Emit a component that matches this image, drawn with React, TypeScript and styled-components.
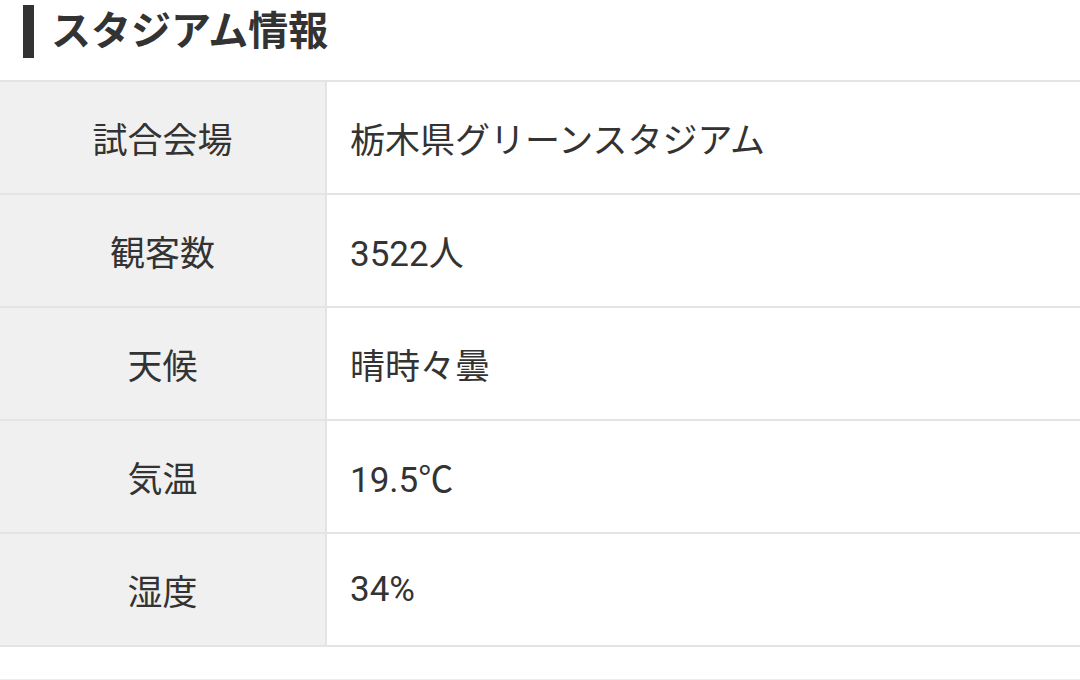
import React from "react";
import styled, { createGlobalStyle } from "styled-components";

const Global = createGlobalStyle`
  html, body { margin: 0; padding: 0; background: #fff; }
  body { font-family: Roboto, "Noto Sans CJK JP", sans-serif; color: #333; }
`;

const Page = styled.div`
  width: 1080px;
  display: flex;
  flex-direction: column;
`;

const Heading = styled.h2`
  margin: 5px 0 0 23px;
  height: 53px;
  display: flex;
  align-items: center;
  gap: 17px;
  font-size: 40px;
  font-weight: 700;
  color: #333;
  line-height: 1;
  &::before {
    content: "";
    width: 11px;
    align-self: stretch;
    background: #333;
  }
`;

const Table = styled.div`
  margin-top: 22px;
  border-top: 2px solid #e4e4e4;
  display: grid;
  grid-template-columns: 327px 1fr;
`;

const Label = styled.div`
  height: 111px;
  background: #f0f0f0;
  border-right: 2px solid #e4e4e4;
  border-bottom: 2px solid #e4e4e4;
  display: flex;
  align-items: center;
  justify-content: center;
  font-size: 35px;
  color: #333;
`;

const Value = styled.div`
  height: 111px;
  border-bottom: 2px solid #e4e4e4;
  display: flex;
  align-items: center;
  padding-left: 23px;
  font-size: 35px;
  color: #333;
`;

const Divider = styled.div`
  margin-top: 32px;
  border-top: 2px solid #ececec;
`;

const rows: [string, string][] = [
  ["試合会場", "栃木県グリーンスタジアム"],
  ["観客数", "3522人"],
  ["天候", "晴時々曇"],
  ["気温", "19.5℃"],
  ["湿度", "34%"],
];

export default function App() {
  return (
    <Page>
      <Global />
      <Heading>スタジアム情報</Heading>
      <Table>
        {rows.map(([k, v]) => (
          <React.Fragment key={k}>
            <Label>{k}</Label>
            <Value>{v}</Value>
          </React.Fragment>
        ))}
      </Table>
      <Divider />
    </Page>
  );
}
